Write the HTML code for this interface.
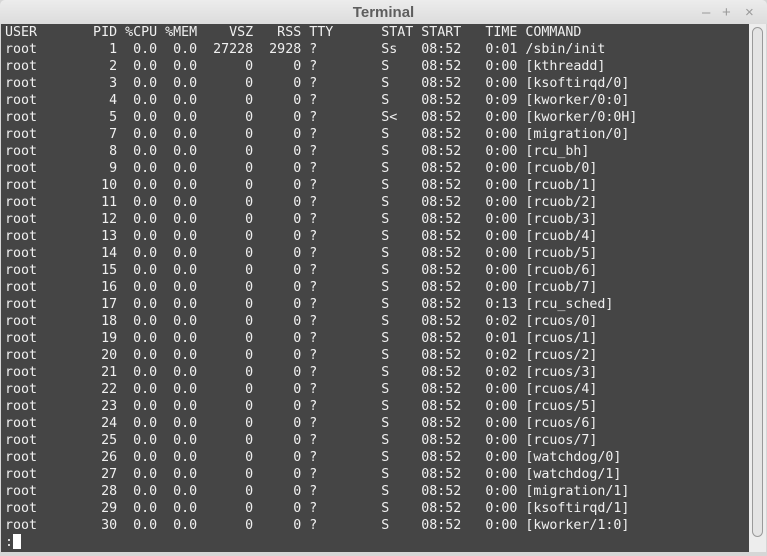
<!DOCTYPE html>
<html><head><style>
body{margin:0;width:767px;height:556px;background:#d6d6d6;overflow:hidden;font-family:"Liberation Sans",sans-serif}
.title{position:absolute;left:0;top:0;width:767px;height:24px;background:linear-gradient(#ececec,#dcdcdc);border-radius:5px 5px 0 0;text-align:center;font-weight:bold;font-size:15px;color:#5e5e5e;line-height:25px}
.ctl{position:absolute;top:0;font-size:15px;color:#9a9a9a;line-height:25px}
.term{position:absolute;left:1px;top:24px;width:748px;height:528px;background:#454545}
pre{margin:0;position:absolute;left:4px;top:0px;font-family:"DejaVu Sans Mono",monospace;font-size:13.3px;line-height:17px;color:#f0f0f0}
.sb{position:absolute;left:749px;top:24px;width:17px;height:528px;background:#ededed}
.thumb{position:absolute;left:3px;top:3px;width:9px;height:508px;border:1px solid #9a9a9a;border-radius:6px;background:#e4e4e4}
.cur{display:inline-block;width:8px;height:15px;background:#fff;vertical-align:-3px}
</style></head><body>
<div class="title">Terminal</div>
<div class="ctl" style="left:702px">–</div><div class="ctl" style="left:722px">+</div><div class="ctl" style="left:745px">×</div>
<div class="term"><pre>USER       PID %CPU %MEM    VSZ   RSS TTY      STAT START   TIME COMMAND
root         1  0.0  0.0  27228  2928 ?        Ss   08:52   0:01 /sbin/init
root         2  0.0  0.0      0     0 ?        S    08:52   0:00 [kthreadd]
root         3  0.0  0.0      0     0 ?        S    08:52   0:00 [ksoftirqd/0]
root         4  0.0  0.0      0     0 ?        S    08:52   0:09 [kworker/0:0]
root         5  0.0  0.0      0     0 ?        S&lt;   08:52   0:00 [kworker/0:0H]
root         7  0.0  0.0      0     0 ?        S    08:52   0:00 [migration/0]
root         8  0.0  0.0      0     0 ?        S    08:52   0:00 [rcu_bh]
root         9  0.0  0.0      0     0 ?        S    08:52   0:00 [rcuob/0]
root        10  0.0  0.0      0     0 ?        S    08:52   0:00 [rcuob/1]
root        11  0.0  0.0      0     0 ?        S    08:52   0:00 [rcuob/2]
root        12  0.0  0.0      0     0 ?        S    08:52   0:00 [rcuob/3]
root        13  0.0  0.0      0     0 ?        S    08:52   0:00 [rcuob/4]
root        14  0.0  0.0      0     0 ?        S    08:52   0:00 [rcuob/5]
root        15  0.0  0.0      0     0 ?        S    08:52   0:00 [rcuob/6]
root        16  0.0  0.0      0     0 ?        S    08:52   0:00 [rcuob/7]
root        17  0.0  0.0      0     0 ?        S    08:52   0:13 [rcu_sched]
root        18  0.0  0.0      0     0 ?        S    08:52   0:02 [rcuos/0]
root        19  0.0  0.0      0     0 ?        S    08:52   0:01 [rcuos/1]
root        20  0.0  0.0      0     0 ?        S    08:52   0:02 [rcuos/2]
root        21  0.0  0.0      0     0 ?        S    08:52   0:02 [rcuos/3]
root        22  0.0  0.0      0     0 ?        S    08:52   0:00 [rcuos/4]
root        23  0.0  0.0      0     0 ?        S    08:52   0:00 [rcuos/5]
root        24  0.0  0.0      0     0 ?        S    08:52   0:00 [rcuos/6]
root        25  0.0  0.0      0     0 ?        S    08:52   0:00 [rcuos/7]
root        26  0.0  0.0      0     0 ?        S    08:52   0:00 [watchdog/0]
root        27  0.0  0.0      0     0 ?        S    08:52   0:00 [watchdog/1]
root        28  0.0  0.0      0     0 ?        S    08:52   0:00 [migration/1]
root        29  0.0  0.0      0     0 ?        S    08:52   0:00 [ksoftirqd/1]
root        30  0.0  0.0      0     0 ?        S    08:52   0:00 [kworker/1:0]
:<span class="cur"></span></pre></div>
<div class="sb"><div class="thumb"></div></div>
</body></html>
